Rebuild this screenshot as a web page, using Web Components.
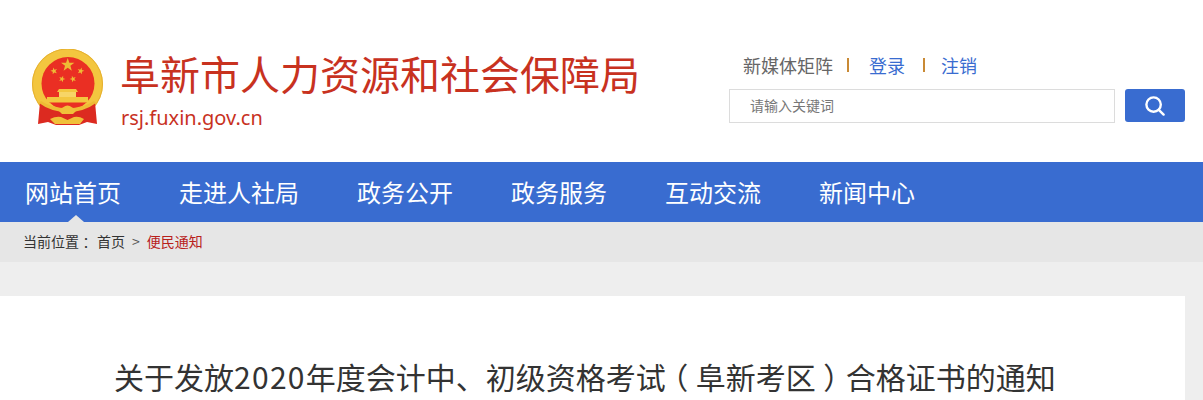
<!DOCTYPE html>
<html lang="zh">
<head>
<meta charset="utf-8">
<title>阜新市人力资源和社会保障局</title>
<style>
html, body { margin: 0; padding: 0; height: 400px; overflow: hidden; background: #eee; }
body { font-family: "Noto Sans CJK SC", "Noto Sans", sans-serif; }
.num { letter-spacing: 1.3px; }
/* parens sit in the middle of their em box in the reference */
.paren { font-feature-settings: "halt"; margin: 0 7.5px; }
</style>
</head>
<body>
<site-header></site-header>
<site-nav></site-nav>
<bread-crumb></bread-crumb>
<article-card>关于发放<span class="num">2020</span>年度会计中、初级资格考试<span class="paren">（</span>阜新考区<span class="paren">）</span>合格证书的通知</article-card>

<script>
// Emblem: drawn by hand, matched to the small logo in the header
class SiteEmblem extends HTMLElement {
    constructor() {
        super();
        this.attachShadow({ mode: 'open' });
        const star = (cx, cy, r, rot) => {
            let pts = [];
            for (let i = 0; i < 10; i++) {
                const rad = i % 2 ? r * 0.4 : r;
                const a = (rot + i * 36 - 90) * Math.PI / 180;
                pts.push((cx + rad * Math.cos(a)).toFixed(2) + ',' + (cy + rad * Math.sin(a)).toFixed(2));
            }
            return `<polygon points="${pts.join(' ')}" fill="#eebc35"/>`;
        };
        this.shadowRoot.innerHTML = `
            <style>
                :host { display: block; width: 74px; height: 78px; flex: none; }
                svg { display: block; }
            </style>
            <svg width="74" height="78" viewBox="0 0 74 78">
                <circle cx="37.5" cy="35" r="35.5" fill="#f3c63f"/>
                <circle cx="37.5" cy="35" r="35" fill="none" stroke="#e6b02f" stroke-width="1"/>
                <circle cx="38" cy="34.5" r="26.5" fill="#ea2f23"/>
                ${star(37.7, 16, 7, 0)}
                ${star(24, 22, 3.6, -15)}
                ${star(50.7, 22, 3.6, 15)}
                ${star(32, 30, 3.4, 20)}
                ${star(43, 30, 3.4, -20)}
                <path d="M29 40 L46 40 L48 43 L27 43 Z" fill="#f3c63f"/>
                <rect x="29" y="43" width="17" height="5" fill="#f7d566"/>
                <rect x="17" y="48" width="41" height="5.5" fill="#f3c63f"/>
                <path d="M10 53 Q20 62 37.5 62.5 Q55 62 65 53 L67 75 L57 73 L49 76 L26 76 L18 73 L8 75 Z" fill="#dc2a20"/>
                <path d="M11 52 Q22 59 37.5 59.5 Q53 59 64 52 L66 54 Q54 63 37.5 63 Q21 63 9 54 Z" fill="#eebb35"/>
                <path d="M29 62 Q33 57 37.5 56.5 Q42 57 46 62 L43 65 L32 65 Z" fill="#f0c03a"/>
                <path d="M20 70 Q26 67 31 68 L37.5 71 L44 68 Q49 67 54 70 L50 75 L25 75 Z" fill="#f0c03a"/>
            </svg>
        `;
    }
}

class SiteHeader extends HTMLElement {
    constructor() {
        super();
        this.attachShadow({ mode: 'open' });
        this.shadowRoot.innerHTML = `
            <style>
                :host {
                    display: flex;
                    height: 162px;
                    box-sizing: border-box;
                    background: #fff;
                    justify-content: space-between;
                }
                .brand { display: flex; padding: 49px 0 0 30px; }
                .names { margin-left: 16px; }
                .name {
                    font-size: 40px;
                    line-height: 48px;
                    color: #c8321f;
                }
                .domain {
                    font-family: "Noto Sans", sans-serif;
                    font-size: 20px;
                    line-height: 28px;
                    margin: 7px 0 0 1px;
                    color: #c8321f;
                }
                .tools { width: 456px; padding-top: 52px; margin-right: 18px; }
                .links {
                    display: flex;
                    align-items: center;
                    height: 26px;
                    padding-left: 14px;
                    font-size: 18px;
                    color: #666;
                }
                .links a { color: #396cd0; text-decoration: none; }
                .sep { width: 2px; height: 14px; background: #c98a35; margin: 0 20px 0 14px; }
                .sep + a + .sep { margin-left: 18px; margin-right: 16px; }
                .search { display: flex; margin-top: 11px; }
                .box {
                    width: 386px;
                    height: 34px;
                    box-sizing: border-box;
                    border: 1px solid #dcdcdc;
                    padding-left: 20px;
                    font-size: 14px;
                    line-height: 31px;
                    color: #777;
                }
                .btn {
                    width: 60px;
                    height: 33px;
                    margin-left: 10px;
                    background: #396cd0;
                    border-radius: 3px;
                    display: flex;
                    align-items: center;
                    justify-content: center;
                }
            </style>
            <div class="brand">
                <site-emblem></site-emblem>
                <div class="names">
                    <div class="name">阜新市人力资源和社会保障局</div>
                    <div class="domain">rsj.fuxin.gov.cn</div>
                </div>
            </div>
            <div class="tools">
                <div class="links">
                    <span>新媒体矩阵</span><i class="sep"></i><a>登录</a><i class="sep"></i><a>注销</a>
                </div>
                <div class="search">
                    <div class="box">请输入关键词</div>
                    <div class="btn">
                        <svg width="20" height="20" viewBox="0 0 20 20" fill="none" stroke="#fff" stroke-width="2.4">
                            <circle cx="8.6" cy="8.6" r="7.2"/>
                            <path d="M13.8 13.8 L18.6 18.6" stroke-linecap="round"/>
                        </svg>
                    </div>
                </div>
            </div>
        `;
    }
}

class SiteNav extends HTMLElement {
    constructor() {
        super();
        this.attachShadow({ mode: 'open' });
        const items = ['网站首页', '走进人社局', '政务公开', '政务服务', '互动交流', '新闻中心'];
        this.shadowRoot.innerHTML = `
            <style>
                :host {
                    display: flex;
                    gap: 58px;
                    height: 60px;
                    padding-left: 25px;
                    background: #396cd0;
                    font-size: 24px;
                    line-height: 60px;
                    color: #fff;
                }
                .item { position: relative; white-space: nowrap; }
                .item.on::after {
                    content: '';
                    position: absolute;
                    left: 43px;
                    bottom: 0;
                    border-left: 8px solid transparent;
                    border-right: 8px solid transparent;
                    border-bottom: 7px solid #e6e6e6;
                }
            </style>
            ${items.map((t, i) => `<div class="item ${i === 0 ? 'on' : ''}">${t}</div>`).join('')}
        `;
    }
}

class BreadCrumb extends HTMLElement {
    constructor() {
        super();
        this.attachShadow({ mode: 'open' });
        this.shadowRoot.innerHTML = `
            <style>
                :host {
                    display: flex;
                    height: 40px;
                    padding-left: 23px;
                    background: #e6e6e6;
                    font-size: 14px;
                    line-height: 38px;
                    color: #333;
                    white-space: nowrap;
                }
                .colon { font-feature-settings: "halt"; margin: 0 3.5px; }
                .home { margin-left: 4px; }
                .gt { margin: 0 7px; color: #555; }
                .now { color: #b8211c; }
            </style>
            <span>当前位置<span class="colon">：</span></span><span class="home">首页</span><span class="gt">&gt;</span><span class="now">便民通知</span>
        `;
    }
}

class ArticleCard extends HTMLElement {
    constructor() {
        super();
        this.attachShadow({ mode: 'open' });
        this.shadowRoot.innerHTML = `
            <style>
                :host {
                    display: block;
                    width: 1185px;
                    margin-top: 34px;
                    height: 104px;
                    box-sizing: border-box;
                    padding: 58px 0 0 114px;
                    background: #fff;
                    font-size: 30px;
                    line-height: 44px;
                    color: #333;
                    white-space: nowrap;
                }
            </style>
            <slot></slot>
        `;
    }
}

customElements.define('site-emblem', SiteEmblem);
customElements.define('site-header', SiteHeader);
customElements.define('site-nav', SiteNav);
customElements.define('bread-crumb', BreadCrumb);
customElements.define('article-card', ArticleCard);
</script>
</body>
</html>
